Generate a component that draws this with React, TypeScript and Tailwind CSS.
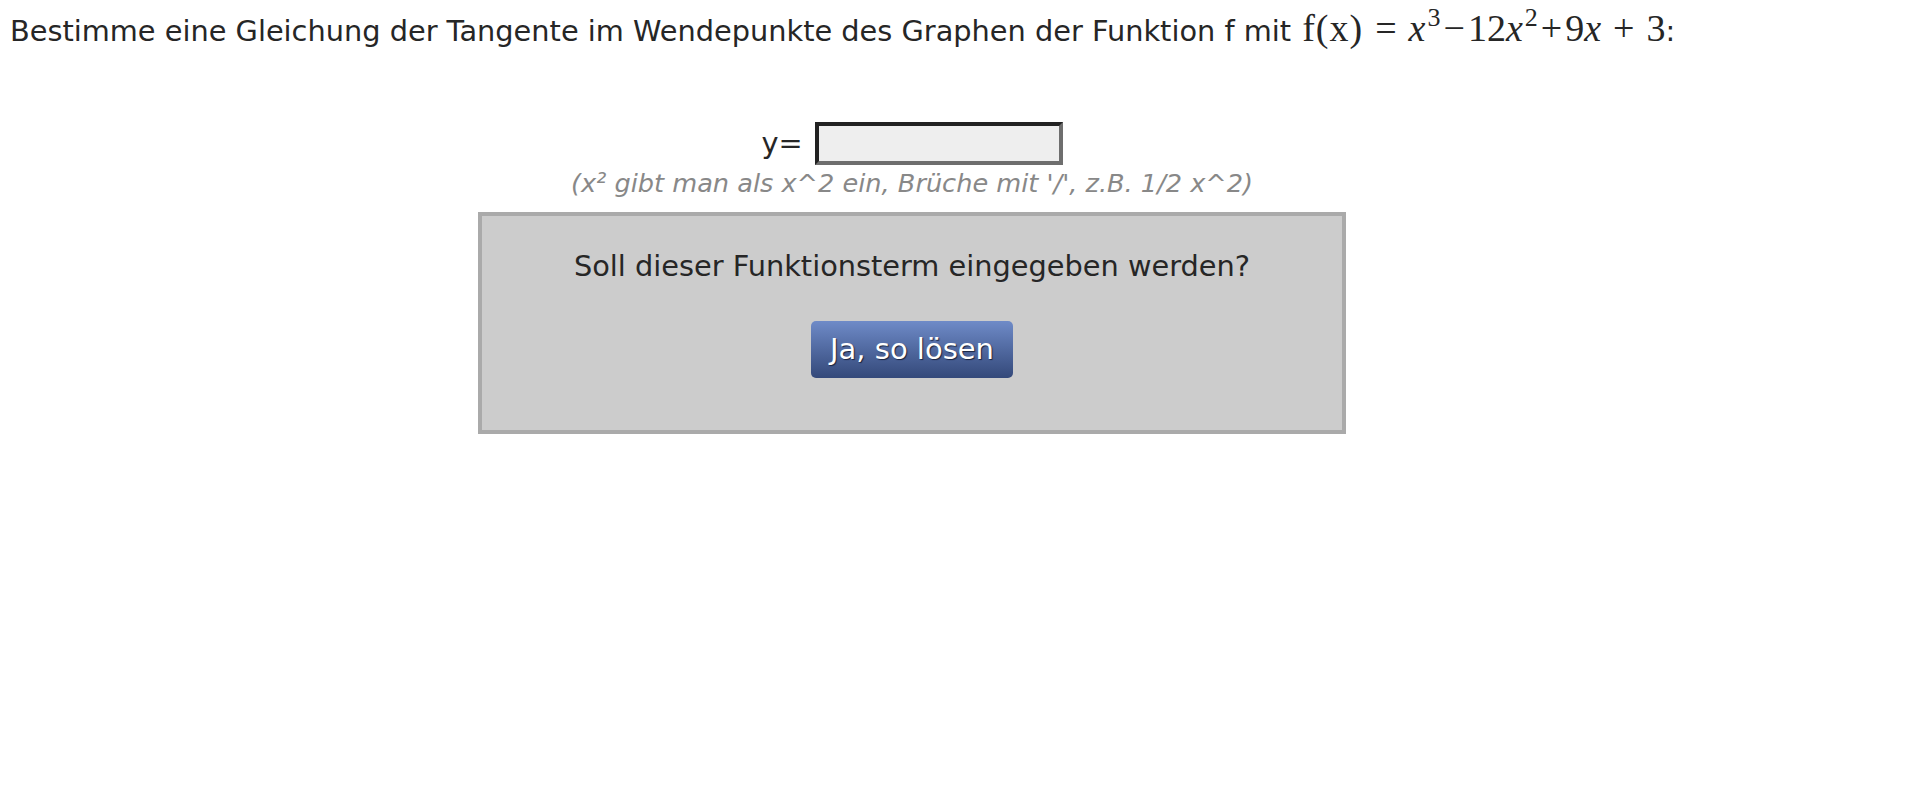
import React from "react";

const sans = "font-['DejaVu_Sans',Verdana,sans-serif]";
const serif = "font-['Liberation_Serif','Times_New_Roman',serif]";

function FormulaF() {
  return (
    <span className={`${serif} text-[38px] leading-none whitespace-nowrap ml-[2px]`}>
      <span className="tracking-[1px]">f(x)</span>
      <span className="mx-[12px]">=</span>
      <span className="italic">x</span>
      <span className="text-[26px] relative -top-[15px] ml-[2px]">3</span>
      <span className="mx-[3px]">−</span>
      <span>12</span>
      <span className="italic">x</span>
      <span className="text-[26px] relative -top-[15px] ml-[2px]">2</span>
      <span className="mx-[3px]">+</span>
      <span>9</span>
      <span className="italic">x</span>
      <span className="mx-[12px]">+</span>
      <span>3</span>
    </span>
  );
}

export default function App() {
  return (
    <div className={`${sans} text-[#262626] bg-white min-h-[810px] w-[1920px]`}>
      {/* Aufgabenstellung */}
      <p className="pl-[10px] pt-[9px] h-[48px] text-[28.8px] leading-[36px] whitespace-nowrap">
        Bestimme eine Gleichung der Tangente im Wendepunkte des Graphen der Funktion f mit <FormulaF />:
      </p>

      {/* Eingabe */}
      <div className="w-[1824px] flex flex-col items-center">
        <div className="mt-[74px] flex items-center gap-[12px]">
          <span className="text-[28.8px] leading-none">y=</span>
          <input
            type="text"
            className="w-[248px] h-[43px] bg-[#eeeeee] border-4 border-t-[#222] border-l-[#222] border-b-[#6e6e6e] border-r-[#6e6e6e] outline-none px-2 text-[22px]"
          />
        </div>
        <p className="mt-[3px] text-[25.6px] leading-[30px] italic text-[#888888] whitespace-nowrap">
          (x² gibt man als x^2 ein, Brüche mit '/', z.B. 1/2 x^2)
        </p>

        {/* Bestätigung */}
        <div className="mt-[14px] w-[868px] h-[222px] bg-[#cccccc] border-4 border-[#aaaaaa] flex flex-col items-center">
          <p className="mt-[34px] text-[28.8px] leading-[32px] whitespace-nowrap">Soll dieser Funktionsterm eingegeben werden?</p>
          <button className="mt-[39px] w-[202px] h-[57px] rounded-[5px] bg-gradient-to-b from-[#6f8bc8] to-[#34497a] text-white text-[29px] [text-shadow:1px_1px_1px_#1a2440]">
            Ja, so lösen
          </button>
        </div>
      </div>
    </div>
  );
}
